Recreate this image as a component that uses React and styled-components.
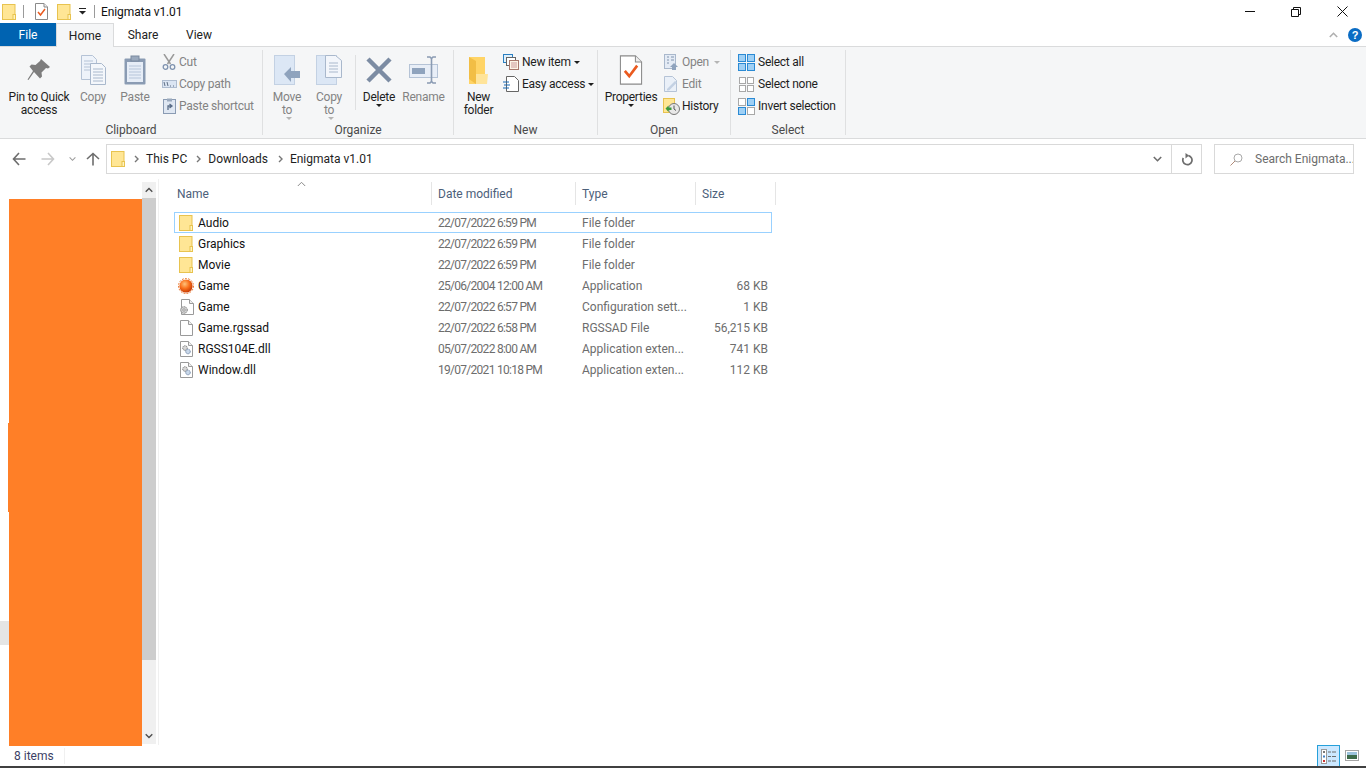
import styled, { createGlobalStyle } from 'styled-components'

const GlobalStyle = createGlobalStyle`
  html, body { margin: 0; padding: 0; background: #fff; overflow: hidden; }
  body { font-family: Roboto, "Noto Sans", "Liberation Sans", sans-serif; font-size: 12px; color: #1e1e1e; }
  * { box-sizing: border-box; }
  svg { display: block; flex: none; }
`

const Window = styled.div`
  width: 1366px;
  height: 768px;
  display: flex;
  flex-direction: column;
  border-bottom: 2px solid #404040;
`

const TitleBar = styled.div`
  height: 23px;
  display: flex;
  align-items: center;
  padding: 0 1px 0 2px;
`
const QuickSep = styled.div`
  width: 1px;
  height: 13px;
  background: #9a9a9a;
  margin: 0 ${p => p.$right}px 0 ${p => p.$left}px;
`
const QuickGap = styled.div`
  width: ${p => p.$w}px;
  flex: none;
`
const Title = styled.span`
  font-size: 12px;
  letter-spacing: -0.1px;
  color: #111;
  flex: 1;
`
const CaptionBtn = styled.div`
  width: 46px;
  height: 23px;
  display: flex;
  align-items: center;
  justify-content: center;
`

const TabRow = styled.div`
  height: 23px;
  display: flex;
  align-items: stretch;
`
const FileTab = styled.div`
  width: 56px;
  background: #0063b1;
  color: #fff;
  display: flex;
  align-items: center;
  justify-content: center;
`
const Tab = styled.div`
  width: ${p => p.$w}px;
  display: flex;
  align-items: center;
  justify-content: center;
  color: #222;
  ${p => p.$active && `
    background: #f5f6f7;
    border: 1px solid #dadbdc;
    border-bottom: none;
    margin-bottom: -1px;
    position: relative;
    z-index: 1;
  `}
`
const TabSpacer = styled.div`
  flex: 1;
`
const TabTools = styled.div`
  display: flex;
  align-items: center;
  gap: 10px;
  padding-right: 4px;
`

const Ribbon = styled.div`
  height: 93px;
  background: #f5f6f7;
  border-top: 1px solid #dadbdc;
  border-bottom: 1px solid #dadbdc;
  display: flex;
  padding-top: 3px;
  letter-spacing: -0.25px;
`
const Group = styled.div`
  width: ${p => p.$w}px;
  height: 85px;
  border-right: 1px solid #dfe0e1;
  display: flex;
  flex-direction: column;
`
const GroupBody = styled.div`
  height: 73px;
  flex: none;
  display: flex;
  padding-left: ${p => p.$pl || 0}px;
`
const GroupLabel = styled.div`
  text-align: center;
  color: #4a4a4a;
  line-height: 14px;
  letter-spacing: 0;
`
const BigBtn = styled.div`
  width: ${p => p.$w}px;
  display: flex;
  flex-direction: column;
  align-items: center;
  padding-top: 3px;
  color: ${p => p.$off ? '#838383' : '#1e1e1e'};
  line-height: 13px;
  text-align: center;
  flex: none;
`
const BigIcon = styled.div`
  height: 34px;
  margin-bottom: 4px;
  display: flex;
  align-items: center;
  justify-content: center;
`
const Caret = styled.span`
  display: inline-block;
  width: 0;
  height: 0;
  border-left: 3px solid transparent;
  border-right: 3px solid transparent;
  border-top: 3px solid ${p => p.$off ? '#b5b5b5' : '#1e1e1e'};
  margin-left: ${p => p.$ml ?? 4}px;
  vertical-align: 2px;
`
const VSep = styled.div`
  width: 1px;
  height: 55px;
  margin: 5px 0 0 5px;
  background: #dfe0e1;
  flex: none;
`
const SmallCol = styled.div`
  display: flex;
  flex-direction: column;
  padding-top: 1px;
  padding-left: ${p => p.$pl || 0}px;
`
const SmallBtn = styled.div`
  height: 22px;
  display: flex;
  align-items: center;
  gap: 3px;
  white-space: nowrap;
  color: ${p => p.$off ? '#838383' : '#1e1e1e'};
`
const SmallIcon = styled.div`
  width: ${p => p.$w || 16}px;
  display: flex;
  justify-content: center;
`

const AddressRow = styled.div`
  height: 40px;
  display: flex;
  align-items: flex-start;
  padding-top: 5px;
`
const NavButtons = styled.div`
  width: 106px;
  height: 29px;
  display: flex;
  align-items: center;
  padding-left: 5px;
`
const NavSlot = styled.div`
  width: ${p => p.$w}px;
  display: flex;
  justify-content: center;
`
const AddressBox = styled.div`
  width: 1096px;
  height: 30px;
  border: 1px solid #d9d9d9;
  display: flex;
  align-items: center;
  padding-left: 4px;
`
const Crumb = styled.span`
  color: #1e1e1e;
`
const CrumbArrow = styled.span`
  width: ${p => p.$w}px;
  padding-left: ${p => p.$pl}px;
  flex: none;
`
const AddressFill = styled.div`
  flex: 1;
`
const AddressBtn = styled.div`
  width: ${p => p.$w}px;
  height: 28px;
  display: flex;
  align-items: center;
  justify-content: center;
  ${p => p.$line && 'border-left: 1px solid #d9d9d9;'}
`
const SearchBox = styled.div`
  width: 140px;
  height: 30px;
  margin-left: 12px;
  border: 1px solid #d9d9d9;
  display: flex;
  align-items: center;
  padding-left: 15px;
  gap: 12px;
  color: #6d6d6d;
  white-space: nowrap;
  overflow: hidden;
`

const Main = styled.div`
  flex: 1;
  display: flex;
  min-height: 0;
`
const NavPane = styled.div`
  width: 159px;
  position: relative;
  border-right: 1px solid #f0f0f0;
  padding: 3px 3px 0 142px;
`
const ScrollBar = styled.div`
  width: 14px;
  height: 562px;
  background: #f0f0f0;
  display: flex;
  flex-direction: column;
`
const ScrollEnd = styled.div`
  height: 16px;
  display: flex;
  align-items: center;
  justify-content: center;
`
const ScrollThumb = styled.div`
  height: 462px;
  background: #cdcdcd;
`
const ScrollTrack = styled.div`
  flex: 1;
`
const HiddenItem = styled.div`
  position: absolute;
  left: 0;
  top: 442px;
  width: 12px;
  height: 24px;
  background: #e5e5e5;
`
const Redaction = styled.div`
  position: absolute;
  left: 9px;
  top: 20px;
  width: 133px;
  height: 547px;
  background: #ff7f27;
  &::before {
    content: '';
    position: absolute;
    left: -1px;
    top: 224px;
    width: 1px;
    height: 89px;
    background: #ff7f27;
  }
`
const Content = styled.div`
  flex: 1;
  padding-left: 12px;
  position: relative;
`
const HeaderRow = styled.div`
  display: grid;
  grid-template-columns: 261px 144px 120px 80px;
  height: 33px;
  padding-top: 3px;
  width: 605px;
`
const HeaderCell = styled.div`
  height: 23px;
  border-right: 1px solid #e5e5e5;
  padding-left: 6px;
  color: #4c607a;
  display: flex;
  align-items: center;
`
const SortMark = styled.div`
  position: absolute;
  left: 138px;
  top: 2px;
`
const FileRow = styled.div`
  width: 598px;
  height: 21px;
  margin-left: 3px;
  display: grid;
  grid-template-columns: 257px 144px 120px 72px;
  align-items: center;
  border: 1px solid ${p => p.$focus ? '#99d1ff' : 'transparent'};
`
const NameCell = styled.div`
  display: flex;
  align-items: center;
  gap: 4px;
  padding-left: 3px;
  color: #111;
`
const FileIcon = styled.div`
  width: 16px;
  display: flex;
  justify-content: center;
`
const MetaCell = styled.div`
  color: #6d6d6d;
  padding-left: 6px;
  white-space: nowrap;
`
const DateCell = styled(MetaCell)`
  letter-spacing: -0.72px;
`
const SizeCell = styled(MetaCell)`
  text-align: right;
  padding-left: 0;
`

const StatusBar = styled.div`
  height: 21px;
  display: flex;
  align-items: center;
  padding: 0 3px 0 14px;
  color: #3c3f66;
`
const StatusSep = styled.div`
  width: 1px;
  height: 16px;
  background: #f0f0f0;
  margin-left: 10px;
`
const StatusFill = styled.div`
  flex: 1;
`
const ViewBtn = styled.div`
  width: 23px;
  height: 21px;
  display: flex;
  align-items: center;
  justify-content: center;
  ${p => p.$active && 'background: #cce8ff; border: 1px solid #26a0da; border-bottom: none;'}
`
const RotSvg = styled.svg`
  transform: rotate(${p => p.$rot}deg);
`

const Folder = ({ s = 1 }) => (
  <svg width={14 * s} height={16 * s} viewBox="0 0 14 16">
    <rect x=".5" y=".5" width="12.5" height="15" fill="#ffe695" stroke="#e8c34f" />
    <rect x="11" y="10.5" width="2.5" height="5" fill="#fff3c0" stroke="#e8c34f" />
  </svg>
)

const CheckDoc = ({ w = 13, h = 17 }) => (
  <svg width={w} height={h} viewBox="0 0 13 17">
    <path d="M.5.5h8.500l3.500 3.500v12.500h-12z" fill="#fff" stroke="#8a8a8a" strokeWidth={w > 13 ? .6 : 1} />
    <path d="M9 .5v3.500h3.500" fill="#eee" stroke="#8a8a8a" strokeWidth={w > 13 ? .6 : 1} />
    <path d="M3 9l2.500 3 4.500-6" fill="none" stroke="#ea5a1f" strokeWidth="1.500" />
  </svg>
)

const ArrowNav = ({ dir = 'left', color = '#6d6d6d' }) => {
  const rot = { left: 0, right: 180, up: 90 }[dir]
  return (
    <RotSvg $rot={rot} width="14" height="14" viewBox="0 0 14 14">
      <path d="M1.500 7h12M7 1L1.500 7 7 13" fill="none" stroke={color} strokeWidth="1.600" />
    </RotSvg>
  )
}

const Chevron = ({ up, color = '#6d6d6d', w = 9, sw = 1.6 }) => (
  <svg width={w} height="6" viewBox="0 0 9 6">
    <path d={up ? 'M.8 5l3.700-3.700L8.200 5' : 'M.8 1l3.700 3.700L8.200 1'} fill="none" stroke={color} strokeWidth={sw} />
  </svg>
)

const CrumbChevron = () => (
  <svg width="5" height="8" viewBox="0 0 5 8">
    <path d="M1 1l3 3-3 3" fill="none" stroke="#777" strokeWidth="1.400" />
  </svg>
)

const PinIcon = () => (
  <svg width="24" height="24" viewBox="0 0 24 24">
    <path d="M14 1l9 8-2 1.500-2-.5-4.500 4.500.5 4-2 2L7 14 1.500 22l-1-.5L6 13 2.500 8.500l2-2 4 .5L13 3z" fill="#7d7d7d" />
  </svg>
)

const CopyIcon = () => (
  <svg width="25" height="30" viewBox="0 0 25 30">
    <path d="M.5.5h11l4 4v20h-15z" fill="#eef3fa" stroke="#b5c3d6" />
    <path d="M3 6h9M3 9h9M3 12h9M3 15h9" stroke="#b5c3d6" />
    <path d="M9.500 8.500h11l4 4v17h-15z" fill="#f4f7fb" stroke="#a9b8cc" />
    <path d="M12 14h10M12 17h10M12 20h10M12 23h10M12 26h10" stroke="#a9b8cc" />
  </svg>
)

const PasteIcon = () => (
  <svg width="22" height="30" viewBox="0 0 22 30">
    <rect x=".5" y="3.500" width="21" height="26" rx="1" fill="#8a9bb3" />
    <rect x="3" y="7" width="16" height="20" fill="#e6edf7" />
    <path d="M5 11h12M5 14h12M5 17h12M5 20h12M5 23h12" stroke="#b6c5da" />
    <rect x="7" y="1" width="8" height="5" fill="#9aa9bd" stroke="#7a8aa0" />
  </svg>
)

const ScissorsIcon = () => (
  <svg width="14" height="16" viewBox="0 0 14 16">
    <path d="M2 0l6.500 10M12 0L5.500 10" stroke="#9a9a9a" strokeWidth="1.500" />
    <circle cx="3.500" cy="13" r="2.300" fill="none" stroke="#7f93b0" strokeWidth="1.300" />
    <circle cx="10.500" cy="13" r="2.300" fill="none" stroke="#7f93b0" strokeWidth="1.300" />
  </svg>
)

const PathIcon = () => (
  <svg width="15" height="8" viewBox="0 0 15 8">
    <rect x=".5" y=".5" width="14" height="7" fill="#dbe5f3" stroke="#aebcd0" />
    <path d="M2 2l1 4M5 2l1 4M8 6h1M11 6h1" stroke="#5f6f85" />
  </svg>
)

const ShortcutIcon = () => (
  <svg width="13" height="16" viewBox="0 0 13 16">
    <rect x=".5" y="1.500" width="12" height="14" fill="#dfe7f2" stroke="#8a9bb3" />
    <rect x="4" y=".5" width="5" height="3" fill="#9aa9bd" />
    <path d="M5 12V8h3M6.500 6L9 8l-2.500 2" fill="none" stroke="#5a6d88" strokeWidth="1.300" />
  </svg>
)

const MoveIcon = () => (
  <svg width="27" height="30" viewBox="0 0 27 30">
    <rect x=".5" y=".5" width="20" height="29" fill="#dce7f5" stroke="#c3d1e3" />
    <path d="M10 19l7-7v4h9v7h-9v4z" fill="#8fa3bd" />
  </svg>
)

const CopyToIcon = () => (
  <svg width="26" height="30" viewBox="0 0 26 30">
    <rect x=".5" y=".5" width="20" height="29" fill="#dce7f5" stroke="#c3d1e3" />
    <path d="M9.500.5h10l6 5v17h-16z" fill="#f3f6fb" stroke="#a9b8cc" />
    <path d="M13 8h9M13 11h9M13 14h9M13 17h9" stroke="#a9b8cc" />
  </svg>
)

const DeleteIcon = () => (
  <svg width="26" height="26" viewBox="0 0 26 26">
    <path d="M2 2l22 22M24 2L2 24" stroke="#7c8ca3" strokeWidth="4.500" />
  </svg>
)

const RenameIcon = () => (
  <svg width="30" height="28" viewBox="0 0 30 28">
    <rect x=".5" y="8.500" width="28" height="13" fill="#e8eef7" stroke="#b5c3d6" />
    <rect x="3" y="12" width="13" height="6" fill="#8fa3bd" />
    <path d="M18 1h3l1.500 1.500L24 1h3M18 27h3l1.500-1.500L24 27h3M22.500 3v22" fill="none" stroke="#8a9bb3" strokeWidth="1.600" />
  </svg>
)

const NewFolderIcon = () => (
  <svg width="19" height="28" viewBox="0 0 19 28">
    <path d="M0 1h16v27H0z" fill="#ffd466" />
    <path d="M0 1l7 4v23L0 23z" fill="#f2be45" />
    <path d="M7 18h12l-1 10H7z" fill="#ffe49a" />
  </svg>
)

const NewItemIcon = () => (
  <svg width="16" height="16" viewBox="0 0 16 16">
    <rect x=".5" y=".5" width="9" height="8" fill="#dff0fc" stroke="#2a7fc1" />
    <rect x="3.500" y="3.500" width="9" height="8" fill="#fff" stroke="#666" />
    <rect x="6.500" y="6.500" width="9" height="9" fill="#fdf4e5" stroke="#a8786b" />
    <path d="M8 9h6M8 11h6M8 13h6" stroke="#c99" />
  </svg>
)

const EasyIcon = () => (
  <svg width="16" height="16" viewBox="0 0 16 16">
    <path d="M3.500.5h8l4 4v11h-12z" fill="#fff" stroke="#666" />
    <path d="M0 6h6M1 9h6M0 12h6" stroke="#1668b5" strokeWidth="1.200" />
  </svg>
)

const OpenSmallIcon = () => (
  <svg width="14" height="16" viewBox="0 0 14 16">
    <rect x=".5" y=".5" width="11" height="14" fill="#e4ebf5" stroke="#a9b8cc" />
    <path d="M3 3h2M3 6h2M3 9h2M7 3h3M7 6h3" stroke="#8094ae" />
    <path d="M10 9l4 4h-2v3H8v-3H6z" fill="#8fa3bd" />
  </svg>
)

const EditIcon = () => (
  <svg width="14" height="16" viewBox="0 0 14 16">
    <path d="M.5.5h8l4 4v11H.5z" fill="#eaf0f8" stroke="#b5c3d6" />
    <path d="M3 13l8-8 2 1.500-8 8H3z" fill="#c3d1e3" />
  </svg>
)

const HistoryIcon = () => (
  <svg width="17" height="17" viewBox="0 0 17 17">
    <rect x=".5" y=".5" width="11" height="14" fill="#ffe695" stroke="#e8c34f" />
    <circle cx="11" cy="11" r="5.500" fill="#e8e8e8" stroke="#777" />
    <path d="M11 7.500V11l2 1.500" fill="none" stroke="#555" />
    <path d="M2.500 10.500l3-3v2h3v2.500h-3v2z" fill="#3d9a3d" />
  </svg>
)

const GridIcon = ({ cells, size = 17 }) => {
  const g = (size - 3) / 2
  const pos = [[0, 0], [g + 2, 0], [0, g + 2], [g + 2, g + 2]]
  return (
    <svg width={size} height={size} viewBox={`0 0 ${size} ${size}`}>
      {pos.map(([x, y], i) => (
        <rect
          key={i}
          x={x + .5}
          y={y + .5}
          width={g}
          height={g}
          fill={cells[i] ? '#9fd0f5' : '#fff'}
          stroke={cells[i] ? '#2a8ad4' : '#a8a8a8'}
        />
      ))}
    </svg>
  )
}

const RefreshIcon = () => (
  <svg width="12" height="13" viewBox="0 0 12 13">
    <path d="M7.500 2.600A4.600 4.600 0 1 1 2.300 5" fill="none" stroke="#6d6d6d" strokeWidth="1.700" />
    <path d="M4.500 0v5.500l3.500-3z" fill="#6d6d6d" />
  </svg>
)

const SearchGlass = () => (
  <svg width="13" height="13" viewBox="0 0 13 13">
    <circle cx="8" cy="5" r="4" fill="none" stroke="#a9a9a9" />
    <path d="M5 8l-4.500 4.500" stroke="#b08a78" />
  </svg>
)

const GameIcon = () => (
  <svg width="16" height="16" viewBox="0 0 16 16">
    <defs>
      <radialGradient id="sun" cx=".4" cy=".35" r=".7">
        <stop offset="0" stopColor="#ffc27a" />
        <stop offset=".5" stopColor="#f9701b" />
        <stop offset="1" stopColor="#bf3200" />
      </radialGradient>
    </defs>
    <circle cx="8" cy="8" r="7.500" fill="none" stroke="#e96a1a" strokeWidth="1" strokeDasharray="1.800 1.300" />
    <circle cx="8" cy="8" r="6.600" fill="url(#sun)" />
  </svg>
)

const PageShape = ({ children }) => (
  <svg width="13" height="16" viewBox="0 0 13 16">
    <path d="M.5.5h8l4 4v11H.5z" fill="#fff" stroke="#9a9a9a" />
    <path d="M8.500.5v4h4" fill="#eee" stroke="#9a9a9a" />
    {children}
  </svg>
)

const ConfigIcon = () => (
  <svg width="15" height="16" viewBox="0 0 15 16">
    <path d="M2.500.5h8l4 4v11h-12z" fill="#fff" stroke="#9a9a9a" />
    <path d="M10.500.5v4h4" fill="#eee" stroke="#9a9a9a" />
    <circle cx="5" cy="11" r="3.300" fill="#d5d5d5" stroke="#777" strokeDasharray="1.400 .7" />
    <circle cx="5" cy="11" r="1.200" fill="#fff" stroke="#777" strokeWidth=".7" />
  </svg>
)

const DllIcon = () => (
  <PageShape>
    <circle cx="5" cy="7" r="2.300" fill="#d8d8d8" stroke="#777" strokeDasharray="1.200 .6" />
    <circle cx="8" cy="10.500" r="2.300" fill="#c9d8ea" stroke="#6f86a6" strokeDasharray="1.200 .6" />
  </PageShape>
)

const BlankIcon = () => <PageShape />

const DetailsIcon = () => (
  <svg width="15" height="15" viewBox="0 0 15 15">
    <rect x=".5" y=".5" width="5" height="14" fill="#fff" stroke="#9a9a9a" />
    <rect x="2" y="2" width="2" height="2" fill="#777" />
    <rect x="2" y="6.500" width="2" height="2" fill="#3f7fc4" />
    <rect x="2" y="11" width="2" height="2" fill="#c33" />
    <path d="M7 3h3M11 3h4M7 7.500h3M11 7.500h4M7 12h3M11 12h4" stroke="#6d6d6d" />
  </svg>
)

const ThumbsIcon = () => (
  <svg width="14" height="11" viewBox="0 0 14 11">
    <rect x=".5" y=".5" width="13" height="10" fill="#fff" stroke="#a5a5a5" />
    <rect x="2" y="2" width="10" height="4" fill="#9cc3dc" />
    <rect x="2" y="5" width="10" height="4" fill="#3e6b4a" />
  </svg>
)

const files = [
  { name: 'Audio', date: '22/07/2022 6:59 PM', type: 'File folder', size: '', icon: <Folder /> },
  { name: 'Graphics', date: '22/07/2022 6:59 PM', type: 'File folder', size: '', icon: <Folder /> },
  { name: 'Movie', date: '22/07/2022 6:59 PM', type: 'File folder', size: '', icon: <Folder /> },
  { name: 'Game', date: '25/06/2004 12:00 AM', type: 'Application', size: '68 KB', icon: <GameIcon /> },
  { name: 'Game', date: '22/07/2022 6:57 PM', type: 'Configuration sett...', size: '1 KB', icon: <ConfigIcon /> },
  { name: 'Game.rgssad', date: '22/07/2022 6:58 PM', type: 'RGSSAD File', size: '56,215 KB', icon: <BlankIcon /> },
  { name: 'RGSS104E.dll', date: '05/07/2022 8:00 AM', type: 'Application exten...', size: '741 KB', icon: <DllIcon /> },
  { name: 'Window.dll', date: '19/07/2021 10:18 PM', type: 'Application exten...', size: '112 KB', icon: <DllIcon /> },
]

export default function App() {
  return (
    <Window>
      <GlobalStyle />
      <TitleBar>
        <Folder />
        <QuickSep $left={7} $right={11} />
        <CheckDoc />
        <QuickGap $w={9} />
        <Folder />
        <QuickGap $w={7} />
        <svg width="9" height="7" viewBox="0 0 9 7">
          <path d="M1 .5h7" stroke="#222" />
          <path d="M1 3h7L4.500 6.500z" fill="#222" />
        </svg>
        <QuickSep $left={7} $right={6} />
        <Title>Enigmata v1.01</Title>
        <CaptionBtn>
          <svg width="10" height="1"><rect width="10" height="1" fill="#111" /></svg>
        </CaptionBtn>
        <CaptionBtn>
          <svg width="10" height="10" viewBox="0 0 10 10">
            <path d="M.5 2.500h7v7h-7zM2.500 2.500v-2h7v7h-2" fill="none" stroke="#111" />
          </svg>
        </CaptionBtn>
        <CaptionBtn>
          <svg width="11" height="11" viewBox="0 0 11 11">
            <path d="M.5.5l10 10M10.500.5l-10 10" stroke="#111" />
          </svg>
        </CaptionBtn>
      </TitleBar>

      <TabRow>
        <FileTab>File</FileTab>
        <Tab $w={58} $active>Home</Tab>
        <Tab $w={58}>Share</Tab>
        <Tab $w={54}>View</Tab>
        <TabSpacer />
        <TabTools>
          <Chevron up color="#b0b0b0" />
          <svg width="14" height="14" viewBox="0 0 14 14">
            <circle cx="7" cy="7" r="7" fill="#0a6cc4" />
            <text x="7" y="11" textAnchor="middle" fontSize="11" fontWeight="700" fill="#fff" fontFamily="Liberation Sans, sans-serif">?</text>
          </svg>
        </TabTools>
      </TabRow>

      <Ribbon>
        <Group $w={263}>
          <GroupBody>
            <BigBtn $w={78}>
              <BigIcon><PinIcon /></BigIcon>
              Pin to Quick<br />access
            </BigBtn>
            <BigBtn $w={30} $off>
              <BigIcon><CopyIcon /></BigIcon>
              Copy
            </BigBtn>
            <BigBtn $w={54} $off>
              <BigIcon><PasteIcon /></BigIcon>
              Paste
            </BigBtn>
            <SmallCol>
              <SmallBtn $off><SmallIcon $w={14}><ScissorsIcon /></SmallIcon>Cut</SmallBtn>
              <SmallBtn $off><SmallIcon $w={14}><PathIcon /></SmallIcon>Copy path</SmallBtn>
              <SmallBtn $off><SmallIcon $w={14}><ShortcutIcon /></SmallIcon>Paste shortcut</SmallBtn>
            </SmallCol>
          </GroupBody>
          <GroupLabel>Clipboard</GroupLabel>
        </Group>

        <Group $w={191}>
          <GroupBody $pl={3}>
            <BigBtn $w={42} $off>
              <BigIcon><MoveIcon /></BigIcon>
              Move<br />to<Caret $off />
            </BigBtn>
            <BigBtn $w={42} $off>
              <BigIcon><CopyToIcon /></BigIcon>
              Copy<br />to<Caret $off />
            </BigBtn>
            <VSep />
            <BigBtn $w={46}>
              <BigIcon><DeleteIcon /></BigIcon>
              Delete<br /><Caret $ml={0} />
            </BigBtn>
            <BigBtn $w={43} $off>
              <BigIcon><RenameIcon /></BigIcon>
              Rename
            </BigBtn>
          </GroupBody>
          <GroupLabel>Organize</GroupLabel>
        </Group>

        <Group $w={144}>
          <GroupBody>
            <BigBtn $w={49}>
              <BigIcon><NewFolderIcon /></BigIcon>
              New<br />folder
            </BigBtn>
            <SmallCol>
              <SmallBtn><SmallIcon><NewItemIcon /></SmallIcon>New item<Caret $ml={0} /></SmallBtn>
              <SmallBtn><SmallIcon><EasyIcon /></SmallIcon>Easy access<Caret $ml={0} /></SmallBtn>
            </SmallCol>
          </GroupBody>
          <GroupLabel>New</GroupLabel>
        </Group>

        <Group $w={133}>
          <GroupBody $pl={5}>
            <BigBtn $w={56}>
              <BigIcon><CheckDoc w={24} h={30} /></BigIcon>
              Properties<br /><Caret $ml={0} />
            </BigBtn>
            <SmallCol $pl={4}>
              <SmallBtn $off><SmallIcon><OpenSmallIcon /></SmallIcon>Open<Caret $off $ml={2} /></SmallBtn>
              <SmallBtn $off><SmallIcon><EditIcon /></SmallIcon>Edit</SmallBtn>
              <SmallBtn><SmallIcon><HistoryIcon /></SmallIcon>History</SmallBtn>
            </SmallCol>
          </GroupBody>
          <GroupLabel>Open</GroupLabel>
        </Group>

        <Group $w={115}>
          <GroupBody $pl={7}>
            <SmallCol>
              <SmallBtn><SmallIcon $w={17}><GridIcon cells={[1, 1, 1, 1]} /></SmallIcon>Select all</SmallBtn>
              <SmallBtn><SmallIcon $w={17}><GridIcon cells={[0, 0, 0, 0]} size={15} /></SmallIcon>Select none</SmallBtn>
              <SmallBtn><SmallIcon $w={17}><GridIcon cells={[0, 1, 1, 0]} /></SmallIcon>Invert selection</SmallBtn>
            </SmallCol>
          </GroupBody>
          <GroupLabel>Select</GroupLabel>
        </Group>
      </Ribbon>

      <AddressRow>
        <NavButtons>
          <NavSlot $w={28}><ArrowNav dir="left" color="#6d6d6d" /></NavSlot>
          <NavSlot $w={29}><ArrowNav dir="right" color="#c8c8c8" /></NavSlot>
          <NavSlot $w={20}><Chevron w={7} color="#9a9a9a" sw={1.3} /></NavSlot>
          <NavSlot $w={22}><ArrowNav dir="up" color="#6d6d6d" /></NavSlot>
        </NavButtons>
        <AddressBox>
          <Folder />
          <CrumbArrow $w={21} $pl={9}><CrumbChevron /></CrumbArrow>
          <Crumb>This PC</Crumb>
          <CrumbArrow $w={21} $pl={9}><CrumbChevron /></CrumbArrow>
          <Crumb>Downloads</Crumb>
          <CrumbArrow $w={22} $pl={10}><CrumbChevron /></CrumbArrow>
          <Crumb>Enigmata v1.01</Crumb>
          <AddressFill />
          <AddressBtn $w={28}><Chevron /></AddressBtn>
          <AddressBtn $w={30} $line><RefreshIcon /></AddressBtn>
        </AddressBox>
        <SearchBox>
          <SearchGlass />
          Search Enigmata...
        </SearchBox>
      </AddressRow>

      <Main>
        <NavPane>
          <ScrollBar>
            <ScrollEnd><Chevron up color="#505050" w={8} /></ScrollEnd>
            <ScrollThumb />
            <ScrollTrack />
            <ScrollEnd><Chevron color="#505050" w={8} /></ScrollEnd>
          </ScrollBar>
          <HiddenItem />
          <Redaction />
        </NavPane>
        <Content>
          <SortMark><Chevron up color="#8a8a8a" w={9} sw={1} /></SortMark>
          <HeaderRow>
            <HeaderCell>Name</HeaderCell>
            <HeaderCell>Date modified</HeaderCell>
            <HeaderCell>Type</HeaderCell>
            <HeaderCell>Size</HeaderCell>
          </HeaderRow>
          {files.map((f, i) => (
            <FileRow key={i} $focus={i === 0}>
              <NameCell><FileIcon>{f.icon}</FileIcon>{f.name}</NameCell>
              <DateCell>{f.date}</DateCell>
              <MetaCell>{f.type}</MetaCell>
              <SizeCell>{f.size}</SizeCell>
            </FileRow>
          ))}
        </Content>
      </Main>

      <StatusBar>
        8 items
        <StatusSep />
        <StatusFill />
        <ViewBtn $active><DetailsIcon /></ViewBtn>
        <ViewBtn><ThumbsIcon /></ViewBtn>
      </StatusBar>
    </Window>
  )
}
